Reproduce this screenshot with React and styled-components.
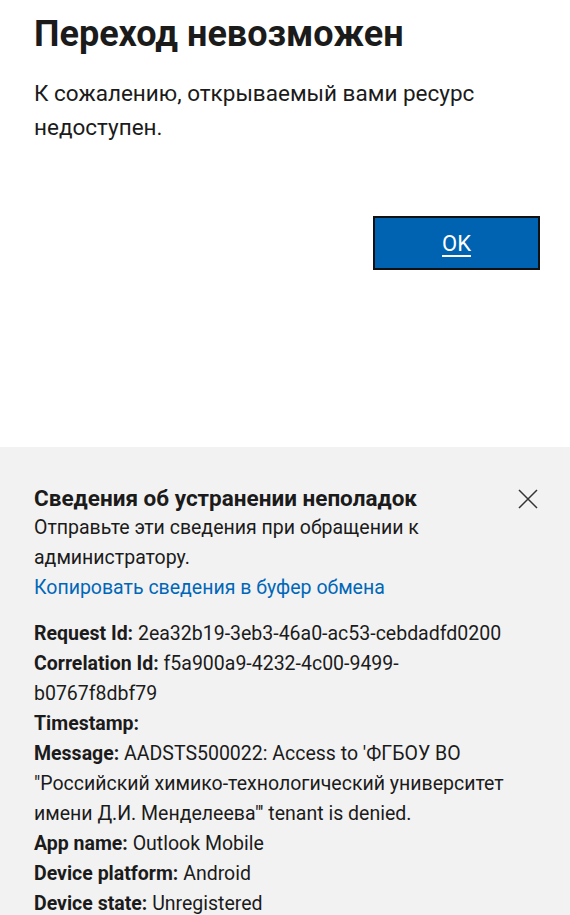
import React from "react";
import styled, { createGlobalStyle } from "styled-components";

const GlobalStyle = createGlobalStyle`
  html, body {
    margin: 0;
    padding: 0;
    background: #ffffff;
  }
  body {
    font-family: Roboto, "Noto Sans", sans-serif;
    color: #1b1b1b;
  }
`;

const Page = styled.div`
  width: 570px;
  min-height: 915px;
  display: flex;
  flex-direction: column;
  background: #ffffff;
`;

const Main = styled.div`
  padding: 12px 30px 0 34px;
  height: 447px;
  box-sizing: border-box;
  display: flex;
  flex-direction: column;
`;

const Title = styled.h1`
  margin: 0;
  font-size: 36px;
  font-weight: 700;
  line-height: 44px;
  color: #1b1b1b;
`;

const Lead = styled.p`
  margin: 20px 0 0;
  font-size: 22.5px;
  line-height: 34px;
  color: #1b1b1b;
`;

const Actions = styled.div`
  display: flex;
  justify-content: flex-end;
  margin-top: 72px;
`;

const PrimaryButton = styled.button`
  width: 167px;
  height: 54px;
  background: #0063b1;
  border: 2px solid #111111;
  color: #ffffff;
  font-family: Roboto, sans-serif;
  font-size: 22px;
  text-decoration: underline;
  text-underline-offset: 4px;
  cursor: pointer;
`;

const Panel = styled.section`
  flex: 1;
  background: #f2f2f2;
  padding: 36px 30px 0 34px;
`;

const PanelHeader = styled.div`
  display: flex;
  justify-content: space-between;
  align-items: flex-start;
`;

const PanelTitle = styled.h2`
  margin: 0;
  font-size: 22.5px;
  font-weight: 700;
  line-height: 30px;
  color: #1b1b1b;
`;

const CloseButton = styled.button`
  background: none;
  border: none;
  padding: 0;
  margin: 6px 2px 0 0;
  width: 20px;
  height: 20px;
  cursor: pointer;
`;

const Body = styled.div`
  max-width: 472px;
`;

const Text = styled.p`
  margin: 0;
  font-size: 19.5px;
  line-height: 30px;
  color: #1b1b1b;
`;

const CopyLink = styled.a`
  display: block;
  font-size: 19.5px;
  line-height: 30px;
  color: #0067b8;
  text-decoration: none;
`;

const Details = styled.div`
  margin-top: 16px;
`;

const Row = styled.div`
  font-size: 19.5px;
  line-height: 30px;
  color: #1b1b1b;
`;

const Label = styled.b`
  font-weight: 700;
`;

const details = [
  ["Request Id:", "2ea32b19-3eb3-46a0-ac53-cebdadfd0200"],
  ["Correlation Id:", "f5a900a9-4232-4c00-9499-b0767f8dbf79"],
  ["Timestamp:", ""],
  [
    "Message:",
    "AADSTS500022: Access to 'ФГБОУ ВО \"Российский химико-технологический университет имени Д.И. Менделеева\"' tenant is denied.",
  ],
  ["App name:", "Outlook Mobile"],
  ["Device platform:", "Android"],
  ["Device state:", "Unregistered"],
];

function CloseIcon() {
  return (
    <svg width="20" height="20" viewBox="0 0 20 20" fill="none">
      <path d="M1 1L19 19M19 1L1 19" stroke="#333" strokeWidth="1.5" />
    </svg>
  );
}

export default function App() {
  return (
    <Page>
      <GlobalStyle />
      <Main>
        <Title>Переход невозможен</Title>
        <Lead>К сожалению, открываемый вами ресурс недоступен.</Lead>
        <Actions>
          <PrimaryButton>OK</PrimaryButton>
        </Actions>
      </Main>
      <Panel>
        <PanelHeader>
          <PanelTitle>Сведения об устранении неполадок</PanelTitle>
          <CloseButton aria-label="Закрыть">
            <CloseIcon />
          </CloseButton>
        </PanelHeader>
        <Body>
          <Text>Отправьте эти сведения при обращении к администратору.</Text>
          <CopyLink href="#">Копировать сведения в буфер обмена</CopyLink>
          <Details>
            {details.map(([label, value]) => (
              <Row key={label}>
                <Label>{label}</Label> {value}
              </Row>
            ))}
          </Details>
        </Body>
      </Panel>
    </Page>
  );
}
